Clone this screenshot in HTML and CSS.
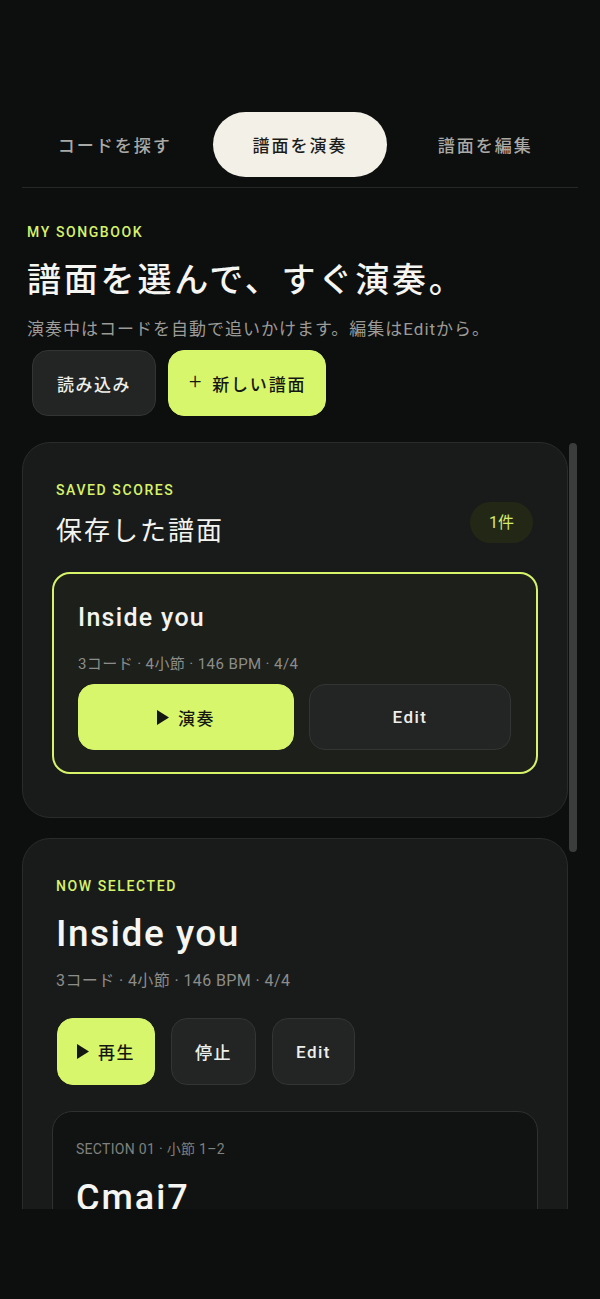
FILE: index.html
```html
<!DOCTYPE html>
<html lang="ja">
<head>
<meta charset="utf-8">
<title>Songbook</title>
<link rel="stylesheet" href="styles.css">
</head>
<body>
<div class="app">
  <nav class="tabs">
    <button class="tab">コードを探す</button>
    <button class="tab active">譜面を演奏</button>
    <button class="tab">譜面を編集</button>
  </nav>

  <header class="intro">
    <p class="eyebrow">MY SONGBOOK</p>
    <h1 class="title">譜面を選んで、すぐ演奏。</h1>
    <p class="lead">演奏中はコードを自動で追いかけます。編集はEditから。</p>
    <div class="actions">
      <button class="btn btn-ghost">読み込み</button>
      <button class="btn btn-primary btn-new"><span class="plus">+</span>新しい譜面</button>
    </div>
  </header>

  <div class="scroll">
    <div class="scroll-inner">
      <section class="card">
        <div class="card-head">
          <div>
            <p class="eyebrow eyebrow-card">SAVED SCORES</p>
            <h2 class="card-title">保存した譜面</h2>
          </div>
          <span class="badge">1件</span>
        </div>
        <article class="score">
          <h3 class="score-name">Inside you</h3>
          <p class="meta">3コード · 4小節 · 146 BPM · 4/4</p>
          <div class="score-actions">
            <button class="btn btn-primary"><svg class="play" viewBox="0 0 12 15" width="12" height="15"><polygon points="0,0 12,7.5 0,15"/></svg>演奏</button>
            <button class="btn btn-ghost">Edit</button>
          </div>
        </article>
      </section>

      <section class="card card-now">
        <p class="eyebrow eyebrow-card">NOW SELECTED</p>
        <h2 class="now-name">Inside you</h2>
        <p class="meta now-meta">3コード · 4小節 · 146 BPM · 4/4</p>
        <div class="now-actions">
          <button class="btn btn-primary btn-play"><svg class="play" viewBox="0 0 12 15" width="12" height="15"><polygon points="0,0 12,7.5 0,15"/></svg>再生</button>
          <button class="btn btn-ghost btn-tall">停止</button>
          <button class="btn btn-ghost btn-tall">Edit</button>
        </div>
        <div class="section">
          <p class="section-label">SECTION 01 · 小節 1–2</p>
          <p class="chord">Cmaj7</p>
        </div>
      </section>
    </div>
    <div class="thumb"></div>
  </div>
</div>
</body>
</html>
```

FILE: styles.css
```css
* { box-sizing: border-box; }

html, body {
  margin: 0;
  background: #0d0e0e;
}

body {
  font-family: Roboto, "Noto Sans CJK JP", sans-serif;
  color: #f3f3f0;
}

p, h1, h2, h3 { margin: 0; }

button { font-family: inherit; cursor: pointer; }

.app {
  height: 1299px;
  overflow: hidden;
  padding: 112px 22px 0;
}

/* Tabs */
.tabs {
  display: grid;
  grid-template-columns: repeat(3, 1fr);
  padding-bottom: 10px;
  border-bottom: 1px solid #262827;
}

.tab {
  margin: 0 6px;
  height: 65px;
  padding: 0;
  border: 0;
  border-radius: 33px;
  background: transparent;
  color: #a9a9a6;
  font-size: 17px;
  font-weight: 500;
  letter-spacing: 2px;
}

.tab.active {
  background: #f3f0e7;
  color: #1c1c1a;
}

/* Intro */
.intro { padding: 0 5px; }

.eyebrow {
  margin-top: 36px;
  font-size: 14px;
  line-height: 16px;
  letter-spacing: 1.6px;
  font-weight: 500;
  color: #d6f36a;
}

.title {
  margin-top: 18px;
  font-size: 34px;
  line-height: 44px;
  letter-spacing: 2.8px;
  font-weight: 500;
  color: #f5f5f2;
}

.lead {
  margin-top: 15px;
  font-size: 17px;
  line-height: 24px;
  letter-spacing: 1px;
  color: #9b9b98;
}

.actions {
  display: flex;
  gap: 12px;
  margin-top: 9px;
  padding-left: 5px;
}

/* Buttons */
.btn {
  display: inline-flex;
  align-items: center;
  justify-content: center;
  gap: 9px;
  height: 66px;
  padding: 0 24px;
  border: 1px solid #323533;
  border-radius: 16px;
  background: #222524;
  color: #eeeeea;
  font-size: 17px;
  font-weight: 500;
  letter-spacing: 1.5px;
}

.btn-primary {
  background: #d8f66c;
  border-color: #d8f66c;
  color: #151712;
  padding: 0 19px;
}

.btn-new { gap: 9px; padding: 0 19px 0 20px; letter-spacing: 1.8px; }

.plus {
  font-size: 22px;
  font-weight: 300;
  line-height: 1;
  margin-top: -2px;
}

.play { fill: #141612; flex: none; }

/* Scroll area */
.scroll {
  position: relative;
  margin-top: 26px;
  height: 767px;
  overflow: hidden;
}

.scroll-inner {
  width: 546px;
  display: flex;
  flex-direction: column;
  gap: 20px;
}

.thumb {
  position: absolute;
  top: 1px;
  right: 1px;
  width: 8px;
  height: 409px;
  border-radius: 4px;
  background: #3a3d3b;
}

/* Cards */
.card {
  background: #191b1a;
  border: 1px solid #2a2c2b;
  border-radius: 28px;
  padding: 39px 29px 43px;
}

.eyebrow-card {
  margin-top: 0;
  padding-left: 4px;
}

.card-head {
  display: flex;
  justify-content: space-between;
  align-items: flex-end;
  padding-right: 5px;
}

.card-title {
  margin-top: 16px;
  padding-left: 4px;
  font-size: 26px;
  line-height: 34px;
  letter-spacing: 2px;
  font-weight: 400;
  color: #f3f3f0;
}

.badge {
  height: 41px;
  margin-bottom: 5px;
  padding: 0 19px;
  border-radius: 21px;
  background: #232816;
  color: #d3ec6c;
  font-size: 16px;
  line-height: 41px;
}

.score {
  margin-top: 24px;
  border: 2px solid #d6f36a;
  border-radius: 18px;
  background: #1c1f1a;
  padding: 28px 25px 22px 24px;
}

.score-name {
  font-size: 25px;
  line-height: 32px;
  letter-spacing: 1.3px;
  font-weight: 500;
  color: #f3f3f0;
}

.meta {
  margin-top: 20px;
  font-size: 15px;
  line-height: 20px;
  letter-spacing: 0.4px;
  color: #8c8d8a;
}

.score-actions {
  display: grid;
  grid-template-columns: 216fr 202fr;
  gap: 15px;
  margin-top: 10px;
}

/* Now selected */
.now-name {
  margin-top: 17px;
  padding-left: 4px;
  font-size: 37px;
  line-height: 46px;
  letter-spacing: 1.5px;
  font-weight: 500;
  color: #f5f5f2;
}

.now-meta {
  margin-top: 13px;
  padding-left: 4px;
  font-size: 16px;
  line-height: 22px;
}

.now-actions {
  display: flex;
  gap: 16px;
  margin-top: 26px;
  padding-left: 5px;
}

.now-actions .btn { height: 67px; }
.now-actions .btn-tall { padding: 0 23px; }

.section {
  margin-top: 26px;
  min-height: 220px;
  border: 1px solid #2e3130;
  border-radius: 20px;
  background: #111312;
  padding: 27px 23px;
}

.section-label {
  font-size: 14px;
  line-height: 20px;
  letter-spacing: 0.3px;
  color: #7f817e;
}

.chord {
  margin-top: 17px;
  font-size: 36px;
  line-height: 44px;
  letter-spacing: 2px;
  font-weight: 500;
  color: #f5f5f2;
}
```
